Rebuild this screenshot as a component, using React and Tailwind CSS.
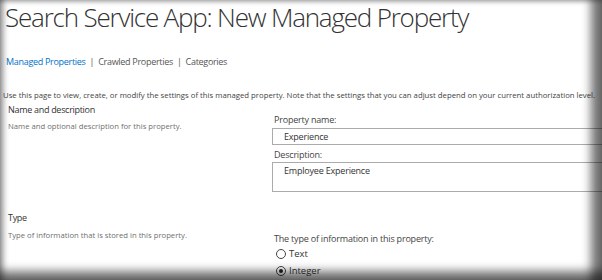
import React from 'react';

const Radio = ({ checked, label }) => (
  <div className="flex items-center gap-[3px] h-[14px]">
    <span className="w-[10px] h-[10px] rounded-full border border-[#444] bg-white flex items-center justify-center">
      {checked && <span className="w-[4px] h-[4px] rounded-full bg-[#222]" />}
    </span>
    <span className="text-[9.5px] text-[#333]">{label}</span>
  </div>
);

const App = () => {
  return (
    <div
      className="relative w-[602px] h-[280px] overflow-hidden bg-white"
      style={{ fontFamily: '"Open Sans", "Liberation Sans", sans-serif' }}
    >
      <h1 className="pl-[5px] pt-[2px] text-[26px] leading-[30px] tracking-[-1.2px] font-light text-[#333] whitespace-nowrap">
        Search Service App: New Managed Property
      </h1>

      <nav className="mt-[23px] pl-[6px] text-[9px] leading-[14px] tracking-[-0.3px] text-[#555] whitespace-nowrap">
        <span className="text-[#0072c6]">Managed Properties</span>
        <span className="mx-[4px]">|</span>
        <span>Crawled Properties</span>
        <span className="mx-[4px]">|</span>
        <span>Categories</span>
      </nav>

      <p className="mt-[20px] pl-[3px] text-[7.75px] leading-[12px] text-[#444] whitespace-nowrap">
        Use this page to view, create, or modify the settings of this managed property. Note that the settings that you can adjust depend on your current authorization level.
      </p>

      <div className="mt-[2px] grid grid-cols-[266px_340px]">
        <div className="pl-[8px]">
          <div className="text-[9px] leading-[14px] tracking-[-0.3px] text-[#333]">Name and description</div>
          <div className="mt-[3px] text-[7.7px] leading-[12px] text-[#6f6f6f]">Name and optional description for this property.</div>
        </div>
        <div className="pl-[6px] pt-[10px]">
          <div className="pl-[2px] text-[9px] leading-[14px] tracking-[-0.2px] text-[#444]">Property name:</div>
          <div className="mt-[1px] h-[17px] border border-[#ababab] pl-[11px] text-[9px] leading-[15px] tracking-[-0.2px] text-[#333]">
            Experience
          </div>
          <div className="mt-[3px] pl-[2px] text-[9px] leading-[14px] tracking-[-0.2px] text-[#444]">Description:</div>
          <div className="h-[30px] border border-[#ababab] pl-[11px] pt-[2px] text-[9px] leading-[12px] tracking-[-0.2px] text-[#333]">
            Employee Experience
          </div>
        </div>
      </div>

      <div className="mt-[19px] grid grid-cols-[266px_340px]">
        <div className="pl-[8px]">
          <div className="text-[9px] leading-[14px] tracking-[-0.3px] text-[#333]">Type</div>
          <div className="mt-[4px] text-[7.7px] leading-[12px] text-[#6f6f6f]">Type of information that is stored in this property.</div>
        </div>
        <div className="pl-[8px] pt-[21px]">
          <div className="text-[9px] leading-[14px] tracking-[-0.2px] text-[#444]">The type of information in this property:</div>
          <div className="mt-[1px] pl-[2px]">
            <Radio label="Text" />
          </div>
          <div className="mt-[3px] pl-[2px]">
            <Radio checked label="Integer" />
          </div>
        </div>
      </div>

      <div className="pointer-events-none absolute inset-0 shadow-[inset_6px_0_6px_-3px_rgba(0,0,0,0.4),inset_-15px_0_10px_-4px_rgba(0,0,0,0.55),inset_0_-13px_10px_-4px_rgba(0,0,0,0.55),inset_0_4px_4px_-2px_rgba(0,0,0,0.2)]" />
    </div>
  );
};

export default App;
